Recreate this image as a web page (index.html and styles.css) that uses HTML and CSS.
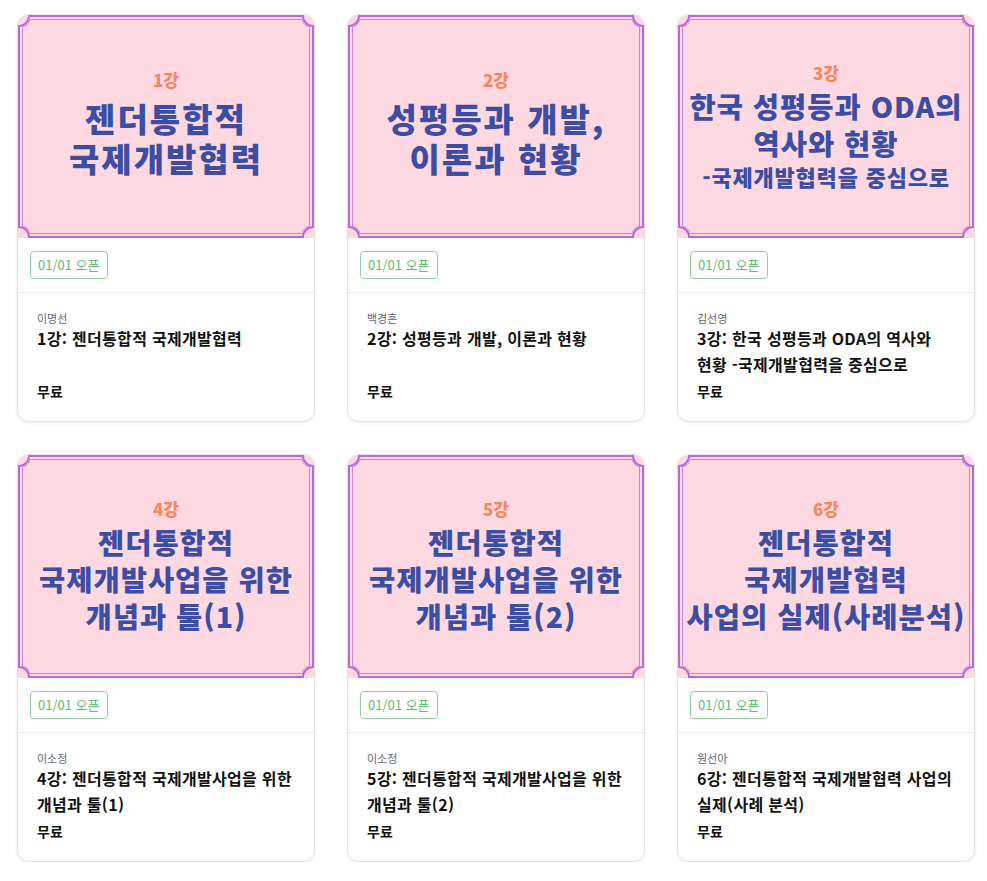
FILE: index.html
```html
<!DOCTYPE html>
<html lang="ko">
<head>
<meta charset="utf-8">
<title>강의 목록</title>
<link rel="stylesheet" href="styles.css">
</head>
<body>
<main class="grid">

  <article class="card">
    <div class="thumb thumb-big">
      <svg class="frame" viewBox="0 0 296 223" aria-hidden="true">
        <path class="frame-outer" d="M11 1H285A10 10 0 0 0 295 11V212A10 10 0 0 0 285 222H11A10 10 0 0 0 1 212V11A10 10 0 0 0 11 1Z"/>
        <path class="frame-inner" d="M11.5 4.5H284.5A7 7 0 0 0 291.5 11.5V211.5A7 7 0 0 0 284.5 218.5H11.5A7 7 0 0 0 4.5 211.5V11.5A7 7 0 0 0 11.5 4.5Z"/>
      </svg>
      <div class="tnum">1강</div>
      <div class="ttitle">젠더통합적<br>국제개발협력</div>
    </div>
    <div class="badge-row"><span class="badge">01/01 오픈</span></div>
    <div class="meta">
      <div class="author">이명선</div>
      <div class="title">1강: 젠더통합적 국제개발협력</div>
      <div class="price">무료</div>
    </div>
  </article>

  <article class="card">
    <div class="thumb thumb-big">
      <svg class="frame" viewBox="0 0 296 223" aria-hidden="true">
        <path class="frame-outer" d="M11 1H285A10 10 0 0 0 295 11V212A10 10 0 0 0 285 222H11A10 10 0 0 0 1 212V11A10 10 0 0 0 11 1Z"/>
        <path class="frame-inner" d="M11.5 4.5H284.5A7 7 0 0 0 291.5 11.5V211.5A7 7 0 0 0 284.5 218.5H11.5A7 7 0 0 0 4.5 211.5V11.5A7 7 0 0 0 11.5 4.5Z"/>
      </svg>
      <div class="tnum">2강</div>
      <div class="ttitle">성평등과 개발,<br>이론과 현황</div>
    </div>
    <div class="badge-row"><span class="badge">01/01 오픈</span></div>
    <div class="meta">
      <div class="author">백경흔</div>
      <div class="title">2강: 성평등과 개발, 이론과 현황</div>
      <div class="price">무료</div>
    </div>
  </article>

  <article class="card">
    <div class="thumb">
      <svg class="frame" viewBox="0 0 296 223" aria-hidden="true">
        <path class="frame-outer" d="M11 1H285A10 10 0 0 0 295 11V212A10 10 0 0 0 285 222H11A10 10 0 0 0 1 212V11A10 10 0 0 0 11 1Z"/>
        <path class="frame-inner" d="M11.5 4.5H284.5A7 7 0 0 0 291.5 11.5V211.5A7 7 0 0 0 284.5 218.5H11.5A7 7 0 0 0 4.5 211.5V11.5A7 7 0 0 0 11.5 4.5Z"/>
      </svg>
      <div class="tnum">3강</div>
      <div class="ttitle">한국 성평등과 ODA의<br>역사와 현황</div>
      <div class="tsub">-국제개발협력을 중심으로</div>
    </div>
    <div class="badge-row"><span class="badge">01/01 오픈</span></div>
    <div class="meta">
      <div class="author">김선영</div>
      <div class="title">3강: 한국 성평등과 ODA의 역사와 현황 -국제개발협력을 중심으로</div>
      <div class="price">무료</div>
    </div>
  </article>

  <article class="card">
    <div class="thumb">
      <svg class="frame" viewBox="0 0 296 223" aria-hidden="true">
        <path class="frame-outer" d="M11 1H285A10 10 0 0 0 295 11V212A10 10 0 0 0 285 222H11A10 10 0 0 0 1 212V11A10 10 0 0 0 11 1Z"/>
        <path class="frame-inner" d="M11.5 4.5H284.5A7 7 0 0 0 291.5 11.5V211.5A7 7 0 0 0 284.5 218.5H11.5A7 7 0 0 0 4.5 211.5V11.5A7 7 0 0 0 11.5 4.5Z"/>
      </svg>
      <div class="tnum">4강</div>
      <div class="ttitle">젠더통합적<br>국제개발사업을 위한<br>개념과 툴(1)</div>
    </div>
    <div class="badge-row"><span class="badge">01/01 오픈</span></div>
    <div class="meta">
      <div class="author">이소정</div>
      <div class="title">4강: 젠더통합적 국제개발사업을 위한 개념과 툴(1)</div>
      <div class="price">무료</div>
    </div>
  </article>

  <article class="card">
    <div class="thumb">
      <svg class="frame" viewBox="0 0 296 223" aria-hidden="true">
        <path class="frame-outer" d="M11 1H285A10 10 0 0 0 295 11V212A10 10 0 0 0 285 222H11A10 10 0 0 0 1 212V11A10 10 0 0 0 11 1Z"/>
        <path class="frame-inner" d="M11.5 4.5H284.5A7 7 0 0 0 291.5 11.5V211.5A7 7 0 0 0 284.5 218.5H11.5A7 7 0 0 0 4.5 211.5V11.5A7 7 0 0 0 11.5 4.5Z"/>
      </svg>
      <div class="tnum">5강</div>
      <div class="ttitle">젠더통합적<br>국제개발사업을 위한<br>개념과 툴(2)</div>
    </div>
    <div class="badge-row"><span class="badge">01/01 오픈</span></div>
    <div class="meta">
      <div class="author">이소정</div>
      <div class="title">5강: 젠더통합적 국제개발사업을 위한 개념과 툴(2)</div>
      <div class="price">무료</div>
    </div>
  </article>

  <article class="card">
    <div class="thumb">
      <svg class="frame" viewBox="0 0 296 223" aria-hidden="true">
        <path class="frame-outer" d="M11 1H285A10 10 0 0 0 295 11V212A10 10 0 0 0 285 222H11A10 10 0 0 0 1 212V11A10 10 0 0 0 11 1Z"/>
        <path class="frame-inner" d="M11.5 4.5H284.5A7 7 0 0 0 291.5 11.5V211.5A7 7 0 0 0 284.5 218.5H11.5A7 7 0 0 0 4.5 211.5V11.5A7 7 0 0 0 11.5 4.5Z"/>
      </svg>
      <div class="tnum">6강</div>
      <div class="ttitle">젠더통합적<br>국제개발협력<br>사업의 실제(사례분석)</div>
    </div>
    <div class="badge-row"><span class="badge">01/01 오픈</span></div>
    <div class="meta">
      <div class="author">원선아</div>
      <div class="title">6강: 젠더통합적 국제개발협력 사업의 실제(사례 분석)</div>
      <div class="price">무료</div>
    </div>
  </article>

</main>
</body>
</html>
```

FILE: styles.css
```css
html, body {
  margin: 0;
  padding: 0;
  background: #ffffff;
}

body {
  font-family: "Noto Sans CJK KR", "Noto Sans", sans-serif;
  color: #111111;
  word-break: keep-all;
}

.grid {
  display: grid;
  grid-template-columns: repeat(3, 298px);
  column-gap: 32px;
  row-gap: 32px;
  padding: 14px 0 0 17px;
}

.card {
  background: #ffffff;
  border: 1px solid #e2e2e2;
  border-radius: 12px;
  overflow: hidden;
  box-shadow: 0 1px 4px rgba(0, 0, 0, 0.07);
}

.thumb {
  position: relative;
  height: 223px;
  background: #ffd9e1;
  display: flex;
  flex-direction: column;
  align-items: center;
  justify-content: center;
  text-align: center;
  font-family: "Noto Sans CJK KR", sans-serif;
  font-weight: 900;
  color: #3b4ea4;
  white-space: nowrap;
}

.thumb-big {
  padding-bottom: 6px;
  box-sizing: border-box;
}

.frame {
  position: absolute;
  left: 0;
  top: 0;
  width: 100%;
  height: 100%;
  fill: none;
}

.frame-outer {
  stroke: #b86bd2;
  stroke-width: 2;
}

.frame-inner {
  stroke: #c987db;
  stroke-width: 1;
}

.tnum {
  position: relative;
  font-size: 17px;
  line-height: 20px;
  color: #f8865f;
  margin-bottom: 4px;
}

.ttitle {
  position: relative;
  font-size: 28.5px;
  line-height: 37px;
  letter-spacing: 1px;
}

.thumb-big .tnum {
  margin-bottom: 8px;
}

.thumb-big .ttitle {
  font-size: 33px;
  line-height: 40px;
  letter-spacing: 2px;
}

.tsub {
  position: relative;
  font-size: 22px;
  line-height: 30px;
  letter-spacing: 0.8px;
}

.badge-row {
  padding: 13px 12px;
  border-bottom: 1px solid #ececec;
}

.badge {
  display: inline-block;
  height: 26px;
  line-height: 26px;
  padding: 0 7px;
  border: 1px solid #8dd39b;
  border-radius: 4px;
  font-size: 13px;
  color: #62bb72;
  vertical-align: top;
}

.meta {
  padding: 17px 12px 20px 19px;
}

.author {
  font-size: 11px;
  line-height: 16px;
  color: #5d6578;
}

.title {
  font-size: 16px;
  line-height: 25.6px;
  min-height: 51.2px;
  font-weight: 700;
  letter-spacing: 0.3px;
  color: #111111;
}

.price {
  margin-top: 4px;
  font-size: 14px;
  line-height: 20px;
  font-weight: 700;
  letter-spacing: 0.2px;
  color: #111111;
}
```
